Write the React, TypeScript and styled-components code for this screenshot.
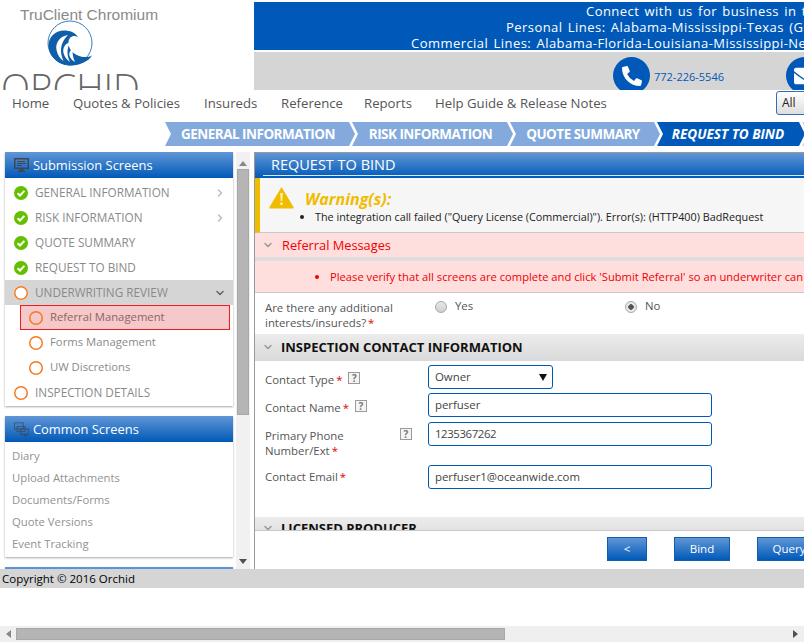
import React from 'react'
import styled, { createGlobalStyle } from 'styled-components'
import { ChevronDown, ChevronRight } from 'lucide-react'
import { FaEnvelope, FaPhoneAlt } from 'react-icons/fa'

const GlobalStyle = createGlobalStyle`
  html, body {
    margin: 0;
    padding: 0;
    overflow: hidden;
    background: #fff;
  }
  * {
    box-sizing: border-box;
  }
`

const BLUE = '#0059b8'
const HEADER_GRADIENT = 'linear-gradient(to bottom, #6096d6, #0059b8)'
const FONT = '"Open Sans", "Noto Sans", sans-serif'

const steps = [
  { label: 'GENERAL INFORMATION', width: 190 },
  { label: 'RISK INFORMATION', width: 161 },
  { label: 'QUOTE SUMMARY', width: 150 },
  { label: 'REQUEST TO BIND', width: 148, current: true },
  { label: 'ISSUE', width: 120, upcoming: true },
]

const navItems = [
  { label: 'Home', width: 61 },
  { label: 'Quotes & Policies', width: 131 },
  { label: 'Insureds', width: 77 },
  { label: 'Reference', width: 83 },
  { label: 'Reports', width: 71 },
  { label: 'Help Guide & Release Notes', width: 341 },
]

const WaveLogo = () => (
  <svg width="46" height="46" viewBox="0 0 46 46">
    <circle cx="23" cy="23" r="22" fill="none" stroke="#1d6fb8" strokeWidth="0.9" />
    <path
      d="M1.500 25C2 16 9 10.500 17 10.500C23 10.500 28 12.500 31 17C26 14.500 22 17 21.500 22C21 28 25 33 31 35.500C36 37.500 41 37.500 45 35.500C42 41 33 45.500 24 45.500C12 45.500 1.500 37 1.500 25Z"
      fill="#0f5fa8"
    />
    <path d="M21 15C13 16 8 23 9.500 30C10.500 35 13 38.500 16.500 41C13 33 12 24 21 15Z" fill="#fff" />
    <path d="M24 22C18 23 15.500 28 16.500 33C17.500 37 20 40 23 42C20 36 19 28 24 22Z" fill="#fff" />
    <path d="M26 29C22.500 30 21.500 34 23 37C24 39 26 41 28 42C26 38 25 33 26 29Z" fill="#fff" />
  </svg>
)

const MonitorIcon = () => (
  <svg width="15" height="14" viewBox="0 0 15 14">
    <path d="M0 0h15v11H9.500v1.500H11V14H4v-1.500h1.500V11H0Zm1.500 1.500v8h12v-8Z" fill="#3f4650" />
    <path d="M3 3h8v1H3Zm0 2h9v1H3Zm0 2h5v1H3Z" fill="#3f4650" />
  </svg>
)

const MonitorsIcon = () => (
  <svg width="15" height="16" viewBox="0 0 17 17" opacity="0.8">
    <path d="M0 1h11v8H0Zm1 1v6h9V2Z" fill="#3f4650" />
    <path d="M3 5h10v7H3Zm1 1v5h8V6Z" fill="#3f4650" />
    <path d="M7 8h10v7h-3v1.500h1V17h-5v-.5h1V15H7Zm1 1v5h8V9Z" fill="#3f4650" />
  </svg>
)

const CheckIcon = () => (
  <svg width="14" height="14" viewBox="0 0 14 14">
    <circle cx="7" cy="7" r="7" fill="#62c000" />
    <path d="M3.600 7.200l2.400 2.300 4.400-4.600" fill="none" stroke="#fff" strokeWidth="2" />
  </svg>
)

const WarningIcon = () => (
  <svg width="25" height="23" viewBox="0 0 25 23">
    <path d="M12.500 1 24.500 21a1 1 0 0 1-.8 1.500H1.300A1 1 0 0 1 .5 21Z" fill="#f0bc00" />
    <path d="M11.200 7h2.600l-.6 8h-1.400Z" fill="#fff3b8" />
    <circle cx="12.500" cy="17.800" r="1.400" fill="#fff3b8" />
  </svg>
)

const Page = styled.div`
  width: 804px;
  height: 642px;
  display: flex;
  flex-direction: column;
  overflow: hidden;
  font-family: ${FONT};
  background: #fff;
`

const Canvas = styled.div`
  width: 1270px;
  flex: 1;
  min-height: 0;
  display: flex;
  flex-direction: column;
`

const Header = styled.header`
  display: flex;
  height: 90px;
  flex: none;
`

const LogoColumn = styled.div`
  width: 254px;
  flex: none;
  height: 90px;
  overflow: hidden;
  display: flex;
  flex-direction: column;
`

const ProductName = styled.div`
  font-family: 'Liberation Sans', Arial, sans-serif;
  font-size: 15.500px;
  line-height: 18px;
  height: 20px;
  padding: 6px 0 0 20px;
  color: #8a8a8a;
`

const LogoMark = styled.div`
  height: 46px;
  margin-left: 47px;
  display: flex;
`

const LogoWord = styled.div`
  font-family: 'Open Sans', sans-serif;
  font-weight: 300;
  font-size: 38px;
  line-height: 38px;
  padding: 2px 0 0 1px;
  color: #666;
`

const HeaderRight = styled.div`
  flex: 1;
  display: flex;
  flex-direction: column;
  padding-top: 2px;
  min-width: 0;
`

const ConnectBanner = styled.div`
  height: 48px;
  padding-top: 1px;
  background: ${BLUE};
  color: #fff;
  font-size: 13px;
  line-height: 16px;
  letter-spacing: 0.45px;
  word-spacing: 1.500px;
  white-space: nowrap;
`

const ConnectLine = styled.div<{ $indent: number }>`
  padding-left: ${({ $indent }) => $indent}px;
`

const ContactStrip = styled.div`
  height: 38px;
  margin-top: 2px;
  background: #d5d5d5;
  display: flex;
  align-items: flex-start;
  padding: 5px 0 0 359px;
  overflow: hidden;
`

const RoundIcon = styled.span`
  width: 37px;
  height: 37px;
  border-radius: 50%;
  background: ${BLUE};
  color: #fff;
  display: flex;
  align-items: center;
  justify-content: center;
  flex: none;
`

const PhoneNumber = styled.span`
  width: 136px;
  padding: 12px 0 0 4px;
  color: ${BLUE};
  font-size: 11px;
  line-height: 16px;
  white-space: nowrap;
`

const NavRow = styled.nav`
  height: 32px;
  flex: none;
  display: flex;
  align-items: center;
  padding-left: 12px;
`

const NavItem = styled.span<{ $width: number }>`
  width: ${({ $width }) => $width}px;
  flex: none;
  font-size: 13.200px;
  line-height: 20px;
  margin-top: -6px;
  color: #555;
  white-space: nowrap;
`

const SearchSelect = styled.div`
  width: 60px;
  height: 24px;
  margin-top: -6px;
  border: 1px solid #2f6fb5;
  border-radius: 3px;
  background: linear-gradient(to bottom, #fff, #ddd);
  color: #222;
  font-size: 12px;
  line-height: 22px;
  padding-left: 5px;
`

const StepRow = styled.div`
  height: 24px;
  flex: none;
  display: flex;
  padding-left: 165px;
`

const Step = styled.div<{ $width: number; $current?: boolean; $upcoming?: boolean }>`
  width: ${({ $width }) => $width}px;
  flex: none;
  height: 24px;
  background: ${({ $current, $upcoming }) =>
    $current ? BLUE : $upcoming ? '#d5d5d5' : '#84aadd'};
  clip-path: polygon(0 0, calc(100% - 6px) 0, 100% 50%, calc(100% - 6px) 100%, 0 100%, 6px 50%);
  color: #fff;
  font-size: 13.500px;
  font-weight: 700;
  font-style: ${({ $current }) => ($current ? 'italic' : 'normal')};
  letter-spacing: ${({ $current }) => ($current ? 0 : -0.52)}px;
  line-height: 24px;
  text-align: center;
  padding-right: ${({ $current }) => ($current ? 6 : 4)}px;
  margin-right: -3px;
  white-space: nowrap;
`

const Body = styled.div`
  flex: 1;
  min-height: 0;
  margin-top: 6px;
  display: flex;
`

const Sidebar = styled.aside`
  width: 250px;
  flex: none;
  display: flex;
  overflow: hidden;
`

const SidebarPanels = styled.div`
  width: 236px;
  flex: none;
  padding-left: 5px;
  padding-right: 3px;
  display: flex;
  flex-direction: column;
  gap: 10px;
  overflow: hidden;
`

const SidePanel = styled.section`
  flex: none;
  background: #fff;
  box-shadow: 0 1px 2px rgba(0, 0, 0, 0.35);
`

const SidePanelTitle = styled.div`
  height: 27px;
  background: ${HEADER_GRADIENT};
  border-bottom: 1px solid #fff;
  color: #fff;
  font-size: 12.900px;
  line-height: 27px;
  display: flex;
  align-items: center;
  gap: 4px;
  padding-left: 9px;
`

const StepList = styled.div`
  display: flex;
  flex-direction: column;
  padding: 1px 0;
`

const ScreenRow = styled.div<{ $active?: boolean; $nested?: boolean; $flagged?: boolean }>`
  height: 25px;
  display: flex;
  align-items: center;
  gap: 7px;
  margin-left: ${({ $nested }) => ($nested ? 15 : 0)}px;
  margin-right: ${({ $flagged }) => ($flagged ? 3 : 0)}px;
  padding-left: ${({ $flagged }) => ($flagged ? 8 : 9)}px;
  padding-right: 7px;
  font-size: ${({ $nested }) => ($nested ? 11.3 : 11.75)}px;
  color: ${({ $flagged }) => ($flagged ? '#8e6464' : '#8a8a8a')};
  background: ${({ $active, $flagged }) =>
    $flagged ? '#f5c9c9' : $active ? '#d5d5d5' : 'transparent'};
  border: ${({ $flagged }) => ($flagged ? '1px solid #f01c1c' : 'none')};
  white-space: nowrap;
`

const RowLabel = styled.span`
  flex: 1;
  padding-bottom: 2px;
`

const PendingDot = styled.span`
  width: 14px;
  height: 14px;
  flex: none;
  border-radius: 50%;
  box-shadow: inset 0 0 0 1.500px #f47a20;
  background: #fff;
`

const FlaggedDot = styled(PendingDot)`
  background: transparent;
`

const CommonList = styled.div`
  display: flex;
  flex-direction: column;
  padding: 2px 0;
`

const CommonItem = styled.div`
  height: 22px;
  line-height: 22px;
  padding-left: 7px;
  font-size: 11.300px;
  color: #929292;
`

const SideScrollbar = styled.div`
  width: 14px;
  flex: none;
  background: #f1f1f1;
  display: flex;
  flex-direction: column;
  align-items: center;
`

const ArrowUp = styled.span`
  width: 0;
  height: 0;
  margin-top: 9px;
  border-left: 4px solid transparent;
  border-right: 4px solid transparent;
  border-bottom: 5px solid #888;
`

const ArrowDown = styled.span`
  width: 0;
  height: 0;
  margin-top: auto;
  margin-bottom: 5px;
  border-left: 4px solid transparent;
  border-right: 4px solid transparent;
  border-top: 5px solid #505050;
`

const SideThumb = styled.div`
  width: 12px;
  height: 246px;
  margin-top: 3px;
  background: #b5b5b5;
  border: 1px solid #a8a8a8;
`

const MainPanel = styled.main`
  width: 1016px;
  margin-left: 4px;
  flex: none;
  display: flex;
  flex-direction: column;
  border-left: 1px solid #999;
  border-top: 1px solid #999;
  min-height: 0;
`

const MainTitle = styled.div`
  height: 25px;
  flex: none;
  background: ${HEADER_GRADIENT};
  padding-left: 8px;
`

const MainTitleText = styled.div`
  height: 23px;
  border-bottom: 1px solid #dbe8f7;
  color: #fff;
  font-size: 14.500px;
  line-height: 23px;
  padding-left: 8px;
`

const Scroller = styled.div`
  flex: 1;
  min-height: 0;
  overflow: hidden;
  display: flex;
  flex-direction: column;
`

const WarningBox = styled.div`
  height: 55px;
  flex: none;
  background: #f6f6f6;
  border-left: 5px solid #f0bc00;
  border-bottom: 1px solid #c8c8c8;
  display: flex;
  flex-direction: column;
  padding: 8px 0 0 9px;
`

const WarningHead = styled.div`
  display: flex;
  align-items: center;
  gap: 11px;
  height: 23px;
`

const WarningTitle = styled.span`
  padding-top: 3px;
  color: #f0bc00;
  font-size: 16px;
  font-weight: 700;
  font-style: italic;
`

const BulletLine = styled.ul`
  margin: 0;
  padding: 0 0 0 46px;
  font-size: 10.800px;
  line-height: 16px;
  color: #222;
  list-style: disc;
  white-space: nowrap;
`

const ReferralHead = styled.div`
  height: 24px;
  flex: none;
  background: #ffdede;
  color: #f00000;
  font-size: 12.800px;
  line-height: 24px;
  display: flex;
  align-items: center;
  gap: 8px;
  padding-left: 7px;
`

const ReferralBody = styled.ul`
  height: 32px;
  flex: none;
  margin: 4px 0 0;
  padding: 0 0 0 75px;
  background: #ffdede;
  border-bottom: 1px solid #c8c8c8;
  box-shadow: 0 -4px 0 #ddd;
  color: #f00000;
  font-size: 11.200px;
  line-height: 32px;
  white-space: nowrap;
`

const QuestionRow = styled.div`
  height: 41px;
  flex: none;
  display: grid;
  grid-template-columns: 170px 190px 1fr;
  padding: 7px 0 0 10px;
`

const FieldLabel = styled.div`
  font-size: 11.400px;
  line-height: 15px;
  color: #555;
`

const Required = styled.span`
  color: #e00000;
  margin-left: -1px;
`

const RadioOption = styled.div`
  display: flex;
  gap: 8px;
  font-size: 11.400px;
  line-height: 12px;
  color: #555;
`

const Radio = styled.span<{ $checked?: boolean }>`
  width: 12px;
  height: 12px;
  margin-top: 1px;
  flex: none;
  border-radius: 50%;
  border: 1px solid #a8a8a8;
  background: ${({ $checked }) =>
    $checked
      ? 'radial-gradient(circle, #555 0 2.500px, #e8e8e8 3px)'
      : 'linear-gradient(to bottom, #e8e8e8, #cfcfcf)'};
`

const SectionHead = styled.div<{ $clipped?: boolean }>`
  height: 27px;
  flex: none;
  background: linear-gradient(to bottom, #ececec, #d9d9d9);
  color: #111;
  font-size: 13px;
  font-weight: 700;
  display: flex;
  align-items: center;
  gap: 7px;
  padding-left: 7px;
  padding-bottom: ${({ $clipped }) => ($clipped ? 5 : 2)}px;
  margin-top: ${({ $clipped }) => ($clipped ? 28 : 0)}px;
`

const FieldGrid = styled.div`
  display: grid;
  grid-template-columns: 163px 1fr;
  grid-template-rows: 23px 24px 38px 24px;
  padding: 4px 0 0 10px;
  row-gap: 5px;
  flex: none;
`

const LabelCell = styled.div<{ $top?: number }>`
  display: flex;
  justify-content: space-between;
  width: 147px;
  padding-top: ${({ $top = 7 }) => $top}px;
`

const InlineLabel = styled.div`
  display: flex;
  gap: 6px;
  font-size: 11.400px;
  line-height: 15px;
  color: #555;
`

const HelpBox = styled.span`
  width: 12px;
  height: 12px;
  flex: none;
  border: 1px solid #9a9a9a;
  background: #f4f4f4;
  color: #777;
  font-size: 10px;
  line-height: 10px;
  font-weight: 700;
  text-align: center;
`

const TextBox = styled.div<{ $width: number; $tight?: boolean }>`
  width: ${({ $width }) => $width}px;
  height: 24px;
  border: 1px solid ${BLUE};
  border-radius: 3px;
  color: #444;
  font-size: 11.400px;
  letter-spacing: ${({ $tight }) => ($tight ? -0.4 : 0)}px;
  line-height: 22px;
  padding-left: 6px;
  display: flex;
  justify-content: space-between;
  align-items: center;
`

const SelectArrow = styled.span`
  width: 0;
  height: 0;
  margin-right: 5px;
  border-left: 4px solid transparent;
  border-right: 4px solid transparent;
  border-top: 7px solid #111;
`

const ActionBar = styled.div`
  height: 39px;
  flex: none;
  border-top: 1px solid #c8c8c8;
  background: #fff;
  display: flex;
  gap: 27px;
  padding: 6px 0 0 352px;
`

const ActionButton = styled.div<{ $width: number }>`
  width: ${({ $width }) => $width}px;
  height: 24px;
  background: ${HEADER_GRADIENT};
  border: 1px solid #0f5fb0;
  color: #fff;
  font-size: 11.500px;
  line-height: 22px;
  text-align: center;
`

const Footer = styled.footer`
  height: 19px;
  flex: none;
  background: #d5d5d5;
  color: #000;
  font-size: 11.500px;
  line-height: 19px;
  padding-left: 2px;
`

const FooterGap = styled.div`
  height: 38px;
  flex: none;
`

const BottomScrollbar = styled.div`
  height: 16px;
  width: 804px;
  flex: none;
  background: #efefef;
  display: flex;
  align-items: center;
`

const ArrowLeft = styled.span`
  width: 0;
  height: 0;
  margin: 0 5px 0 6px;
  border-top: 4px solid transparent;
  border-bottom: 4px solid transparent;
  border-right: 5px solid #888;
`

const ArrowRight = styled.span`
  width: 0;
  height: 0;
  margin: 0 6px 0 auto;
  border-top: 4px solid transparent;
  border-bottom: 4px solid transparent;
  border-left: 5px solid #505050;
`

const BottomThumb = styled.div`
  width: 489px;
  height: 12px;
  background: #b5b5b5;
  border: 1px solid #a8a8a8;
`

export default function App(): JSX.Element {
  return (
    <Page>
      <GlobalStyle />
      <Canvas>
        <Header>
          <LogoColumn>
            <ProductName>TruClient Chromium</ProductName>
            <LogoMark>
              <WaveLogo />
            </LogoMark>
            <LogoWord>ORCHID</LogoWord>
          </LogoColumn>
          <HeaderRight>
            <ConnectBanner>
              <ConnectLine $indent={332}>Connect with us for business in the following states:</ConnectLine>
              <ConnectLine $indent={252}>Personal Lines: Alabama-Mississippi-Texas (Gulf Coast)</ConnectLine>
              <ConnectLine $indent={157}>Commercial Lines: Alabama-Florida-Louisiana-Mississippi-New York</ConnectLine>
            </ConnectBanner>
            <ContactStrip>
              <RoundIcon>
                <FaPhoneAlt size={20} />
              </RoundIcon>
              <PhoneNumber>772-226-5546</PhoneNumber>
              <RoundIcon>
                <FaEnvelope size={22} />
              </RoundIcon>
            </ContactStrip>
          </HeaderRight>
        </Header>

        <NavRow>
          {navItems.map((item) => (
            <NavItem key={item.label} $width={item.width}>
              {item.label}
            </NavItem>
          ))}
          <SearchSelect>All</SearchSelect>
        </NavRow>

        <StepRow>
          {steps.map((step) => (
            <Step
              key={step.label}
              $width={step.width}
              $current={step.current}
              $upcoming={step.upcoming}
            >
              {step.label}
            </Step>
          ))}
        </StepRow>

        <Body>
          <Sidebar>
            <SidebarPanels>
              <SidePanel>
                <SidePanelTitle>
                  <MonitorIcon />
                  Submission Screens
                </SidePanelTitle>
                <StepList>
                  <ScreenRow>
                    <CheckIcon />
                    <RowLabel>GENERAL INFORMATION</RowLabel>
                    <ChevronRight size={12} color="#bbb" strokeWidth={3} />
                  </ScreenRow>
                  <ScreenRow>
                    <CheckIcon />
                    <RowLabel>RISK INFORMATION</RowLabel>
                    <ChevronRight size={12} color="#bbb" strokeWidth={3} />
                  </ScreenRow>
                  <ScreenRow>
                    <CheckIcon />
                    <RowLabel>QUOTE SUMMARY</RowLabel>
                  </ScreenRow>
                  <ScreenRow>
                    <CheckIcon />
                    <RowLabel>REQUEST TO BIND</RowLabel>
                  </ScreenRow>
                  <ScreenRow $active>
                    <PendingDot />
                    <RowLabel>UNDERWRITING REVIEW</RowLabel>
                    <ChevronDown size={12} color="#666" strokeWidth={3} />
                  </ScreenRow>
                  <ScreenRow $nested $flagged>
                    <FlaggedDot />
                    <RowLabel>Referral Management</RowLabel>
                  </ScreenRow>
                  <ScreenRow $nested>
                    <PendingDot />
                    <RowLabel>Forms Management</RowLabel>
                  </ScreenRow>
                  <ScreenRow $nested>
                    <PendingDot />
                    <RowLabel>UW Discretions</RowLabel>
                  </ScreenRow>
                  <ScreenRow>
                    <PendingDot />
                    <RowLabel>INSPECTION DETAILS</RowLabel>
                  </ScreenRow>
                </StepList>
              </SidePanel>
              <SidePanel>
                <SidePanelTitle>
                  <MonitorsIcon />
                  Common Screens
                </SidePanelTitle>
                <CommonList>
                  <CommonItem>Diary</CommonItem>
                  <CommonItem>Upload Attachments</CommonItem>
                  <CommonItem>Documents/Forms</CommonItem>
                  <CommonItem>Quote Versions</CommonItem>
                  <CommonItem>Event Tracking</CommonItem>
                </CommonList>
              </SidePanel>
              <SidePanel>
                <SidePanelTitle />
              </SidePanel>
            </SidebarPanels>
            <SideScrollbar>
              <ArrowUp />
              <SideThumb />
              <ArrowDown />
            </SideScrollbar>
          </Sidebar>

          <MainPanel>
            <MainTitle>
              <MainTitleText>REQUEST TO BIND</MainTitleText>
            </MainTitle>
            <Scroller>
              <WarningBox>
                <WarningHead>
                  <WarningIcon />
                  <WarningTitle>Warning(s):</WarningTitle>
                </WarningHead>
                <BulletLine>
                  <li>The integration call failed ("Query License (Commercial)"). Error(s): (HTTP400) BadRequest</li>
                </BulletLine>
              </WarningBox>
              <ReferralHead>
                <ChevronDown size={12} color="#999" strokeWidth={3} />
                Referral Messages
              </ReferralHead>
              <ReferralBody>
                <li>Please verify that all screens are complete and click 'Submit Referral' so an underwriter can review this submission.</li>
              </ReferralBody>
              <QuestionRow>
                <FieldLabel>
                  Are there any additional interests/insureds? <Required>*</Required>
                </FieldLabel>
                <RadioOption>
                  <Radio />
                  Yes
                </RadioOption>
                <RadioOption>
                  <Radio $checked />
                  No
                </RadioOption>
              </QuestionRow>
              <SectionHead>
                <ChevronDown size={12} color="#999" strokeWidth={3} />
                INSPECTION CONTACT INFORMATION
              </SectionHead>
              <FieldGrid>
                <LabelCell>
                  <InlineLabel>
                    <span>Contact Type <Required>*</Required></span>
                    <HelpBox>?</HelpBox>
                  </InlineLabel>
                </LabelCell>
                <TextBox $width={125}>
                  Owner
                  <SelectArrow />
                </TextBox>
                <LabelCell>
                  <InlineLabel>
                    <span>Contact Name <Required>*</Required></span>
                    <HelpBox>?</HelpBox>
                  </InlineLabel>
                </LabelCell>
                <TextBox $width={284}>perfuser</TextBox>
                <LabelCell $top={6}>
                  <FieldLabel>
                    Primary Phone
                    <br />
                    Number/Ext <Required>*</Required>
                  </FieldLabel>
                  <HelpBox>?</HelpBox>
                </LabelCell>
                <TextBox $width={284} $tight>1235367262</TextBox>
                <LabelCell $top={4}>
                  <InlineLabel>
                    <span>Contact Email <Required>*</Required></span>
                  </InlineLabel>
                </LabelCell>
                <TextBox $width={284}>perfuser1@oceanwide.com</TextBox>
              </FieldGrid>
              <SectionHead $clipped>
                <ChevronDown size={12} color="#999" strokeWidth={3} />
                LICENSED PRODUCER
              </SectionHead>
            </Scroller>
            <ActionBar>
              <ActionButton $width={40}>&lt;</ActionButton>
              <ActionButton $width={56}>Bind</ActionButton>
              <ActionButton $width={64}>Query</ActionButton>
            </ActionBar>
          </MainPanel>
        </Body>

        <Footer>Copyright © 2016 Orchid</Footer>
        <FooterGap />
      </Canvas>
      <BottomScrollbar>
        <ArrowLeft />
        <BottomThumb />
        <ArrowRight />
      </BottomScrollbar>
    </Page>
  )
}
